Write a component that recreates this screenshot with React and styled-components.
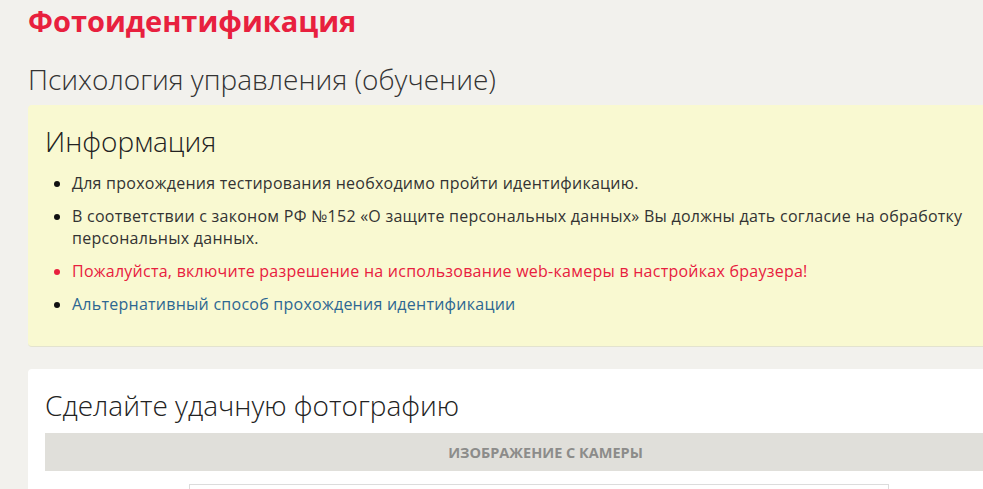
import styled, { createGlobalStyle } from "styled-components";

const Global = createGlobalStyle`
  html, body {
    margin: 0;
    padding: 0;
    background: #f2f1ed;
    overflow-x: hidden;
  }
  body {
    font-family: "Open Sans", "Liberation Sans", sans-serif;
    color: #333;
  }
`;

const Page = styled.div`
  width: 1034px;
  padding: 0 0 0 28px;
`;

const Title = styled.h1`
  margin: 0;
  padding-top: 2px;
  font-size: 29px;
  line-height: 38px;
  font-weight: 700;
  color: #e8203e;
`;

const Subtitle = styled.h2`
  margin: 22px 0 0;
  font-size: 28px;
  line-height: 34px;
  font-weight: 300;
  color: #333;
`;

const Panel = styled.section`
  margin-top: ${(p) => p.$top}px;
  background: ${(p) => (p.$warn ? "#f9f9d1" : "#fff")};
  border-radius: 4px 0 0 4px;
  border-bottom: ${(p) => (p.$warn ? "1px solid #e3e3cf" : "none")};
  padding: 17px 16px ${(p) => (p.$warn ? "31px" : "0")} 17px;
`;

const PanelTitle = styled.h3`
  margin: 0 0 ${(p) => p.$gap}px;
  font-size: 28px;
  line-height: 38px;
  font-weight: 300;
  color: #222;
`;

const List = styled.ul`
  margin: 0;
  padding-left: 27px;
  list-style: disc;
`;

const Item = styled.li`
  font-size: 16px;
  letter-spacing: 0.25px;
  line-height: 22px;
  margin-bottom: 11px;
  color: ${(p) => p.$color || "#333"};
  &::marker {
    color: ${(p) => (p.$red ? "#e8203e" : "#111")};
  }
  &:last-child {
    margin-bottom: 0;
  }
`;

const CameraBar = styled.div`
  background: #e0dfda;
  height: 38px;
  display: flex;
  align-items: center;
  justify-content: center;
  font-size: 14.5px;
  font-weight: 700;
  color: #8c8c8a;
  text-transform: uppercase;
`;

const Preview = styled.div`
  width: 698px;
  height: 40px;
  margin: 13px 0 0 144px;
  border: 1px solid #dcdcdc;
  border-bottom: none;
`;

export default function App() {
  return (
    <>
      <Global />
      <Page>
        <Title>Фотоидентификация</Title>
        <Subtitle>Психология управления (обучение)</Subtitle>
        <Panel $warn $top={9}>
          <PanelTitle $gap={12}>Информация</PanelTitle>
          <List>
            <Item>Для прохождения тестирования необходимо пройти идентификацию.</Item>
            <Item>
              В соответствии с законом РФ №152 «О защите персональных данных» Вы должны дать согласие на обработку
              персональных данных.
            </Item>
            <Item $red $color="#e8203e">
              Пожалуйста, включите разрешение на использование web-камеры в настройках браузера!
            </Item>
            <Item $color="#2d6792">Альтернативный способ прохождения идентификации</Item>
          </List>
        </Panel>
        <Panel $top={22}>
          <PanelTitle $gap={9}>Сделайте удачную фотографию</PanelTitle>
          <CameraBar>Изображение с камеры</CameraBar>
          <Preview />
        </Panel>
      </Page>
    </>
  );
}
